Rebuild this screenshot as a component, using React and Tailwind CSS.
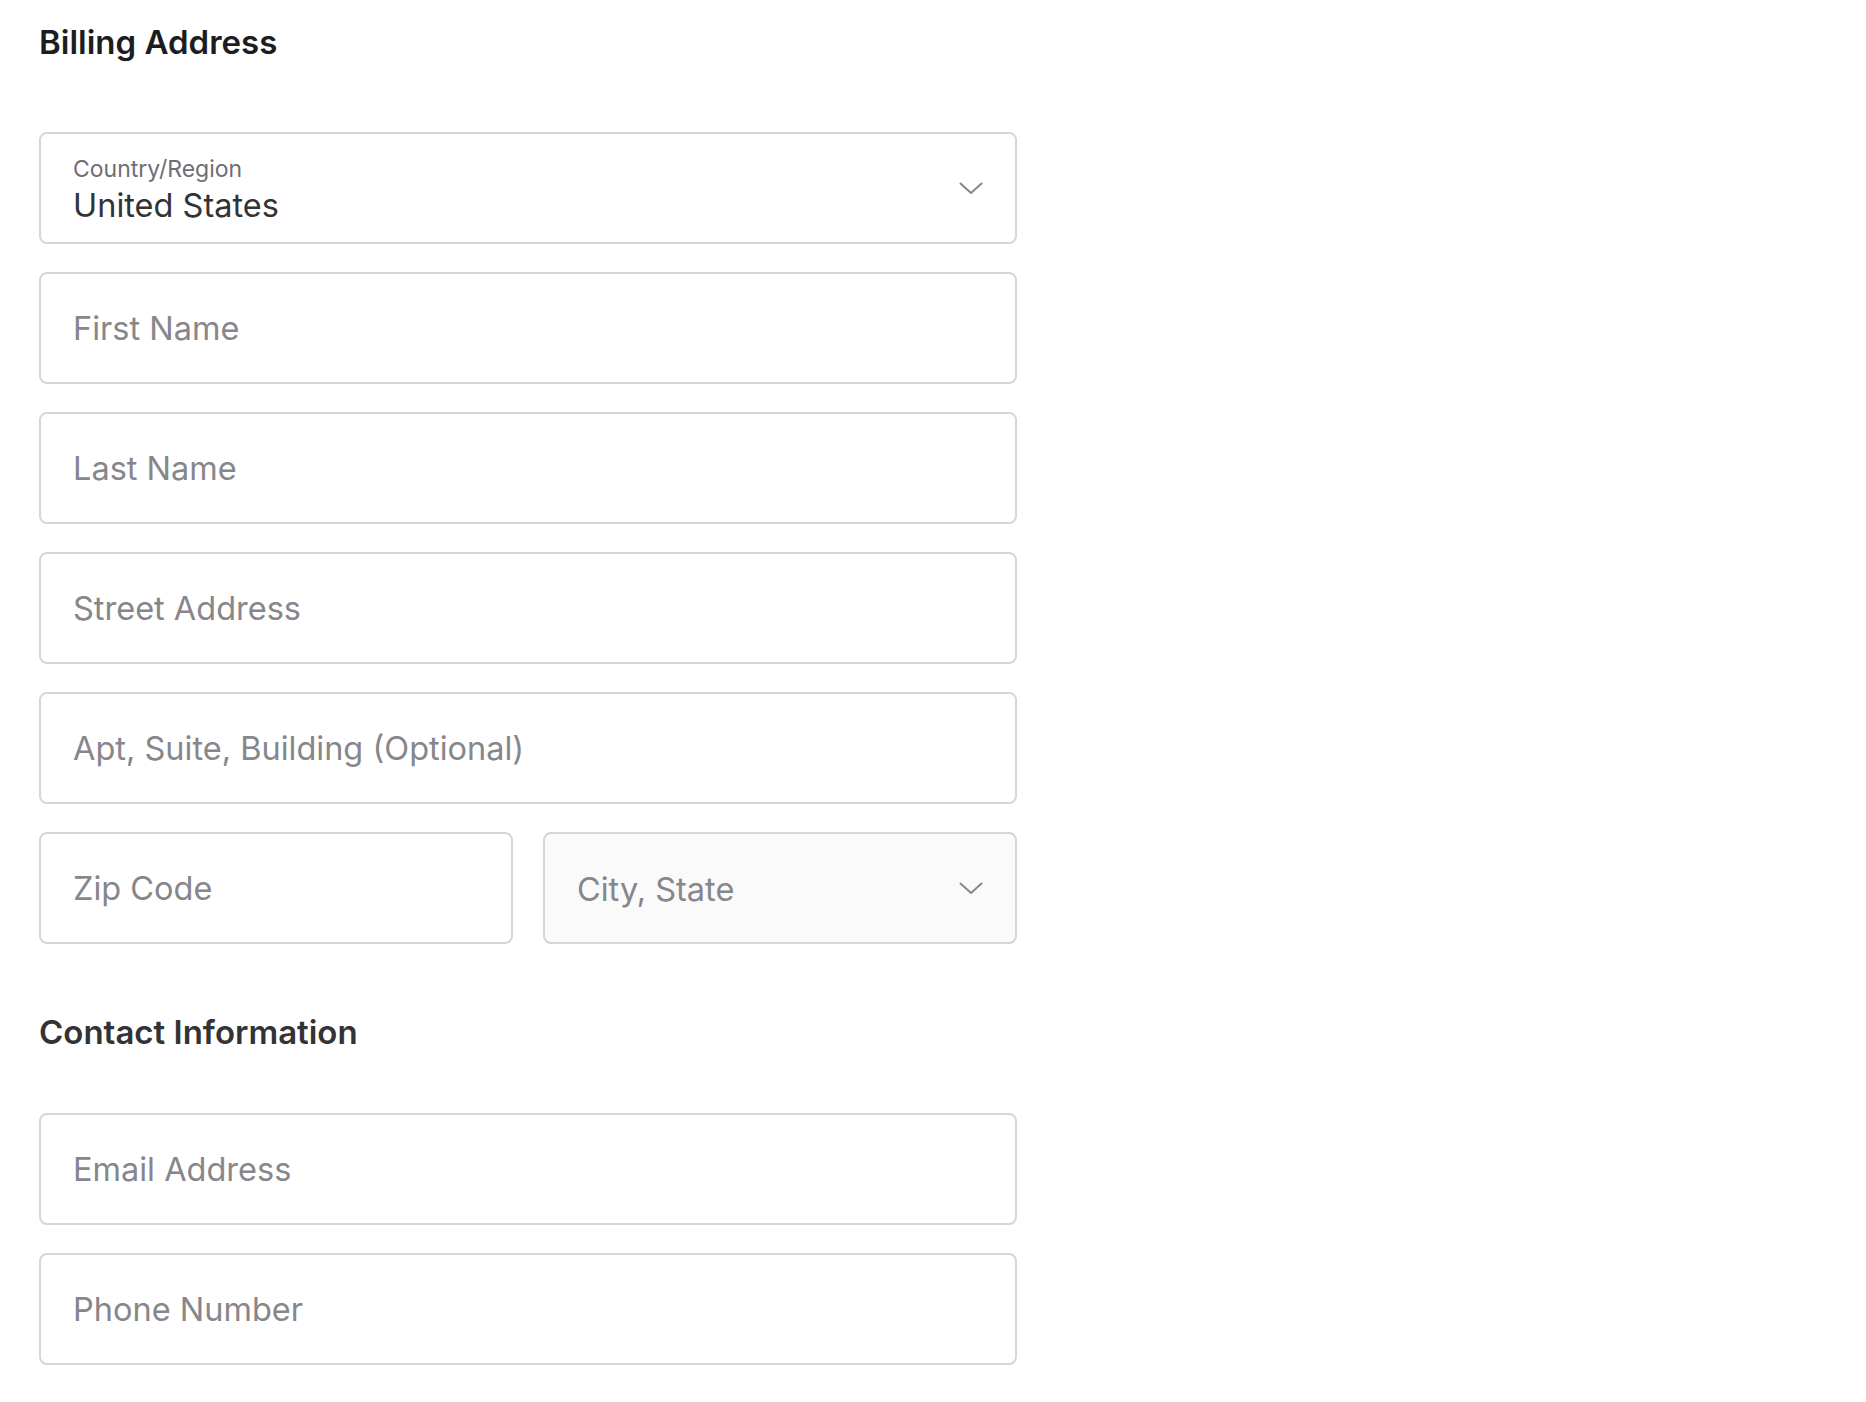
import React from "react";

const font = { fontFamily: "Inter, 'Noto Sans', 'Liberation Sans', sans-serif" };

function Chevron() {
  return (
    <svg width="24" height="13" viewBox="0 0 24 13" fill="none" className="shrink-0">
      <path d="M1.5 1.5 L12 11 L22.5 1.5" stroke="#86868b" strokeWidth="2" strokeLinecap="round" strokeLinejoin="round" />
    </svg>
  );
}

function Field({ placeholder }) {
  return (
    <div className="h-[112px] w-full rounded-[8px] border-2 border-[#d6d6d6] bg-white flex items-center pl-[32px] pr-[32px]">
      <span className="text-[32.5px] leading-none text-[#86868b] pt-[2px]">{placeholder}</span>
    </div>
  );
}

function SelectField({ placeholder }) {
  return (
    <div className="h-[112px] w-full rounded-[8px] border-2 border-[#d6d6d6] bg-[#fafafa] flex items-center justify-between pl-[32px] pr-[32px]">
      <span className="text-[32.5px] leading-none text-[#86868b] pt-[5px]">{placeholder}</span>
      <Chevron />
    </div>
  );
}

export default function App() {
  return (
    <div className="min-h-screen bg-white pl-[39px] pt-[24px]" style={font}>
      <div className="w-[978px]">
        <h2 className="text-[33px] leading-[36px] font-semibold text-[#1d1d1f] mb-[72px]">Billing Address</h2>

        <div className="flex flex-col gap-[28px]">
          <div className="h-[112px] w-full rounded-[8px] border-2 border-[#d6d6d6] bg-white flex items-center justify-between pl-[32px] pr-[32px]">
            <div className="flex flex-col pt-[3px]">
              <span className="text-[23px] leading-[26px] text-[#6e6e73]">Country/Region</span>
              <span className="text-[32.5px] leading-[36px] text-[#333336] mt-[6px]">United States</span>
            </div>
            <Chevron />
          </div>
          <Field placeholder="First Name" />
          <Field placeholder="Last Name" />
          <Field placeholder="Street Address" />
          <Field placeholder="Apt, Suite, Building (Optional)" />
          <div className="grid grid-cols-2 gap-[30px]">
            <Field placeholder="Zip Code" />
            <SelectField placeholder="City, State" />
          </div>
        </div>

        <h2 className="text-[33px] leading-[36px] font-semibold text-[#333336] mt-[70px] mb-[63px]">Contact Information</h2>

        <div className="flex flex-col gap-[28px]">
          <Field placeholder="Email Address" />
          <Field placeholder="Phone Number" />
        </div>
      </div>
    </div>
  );
}
